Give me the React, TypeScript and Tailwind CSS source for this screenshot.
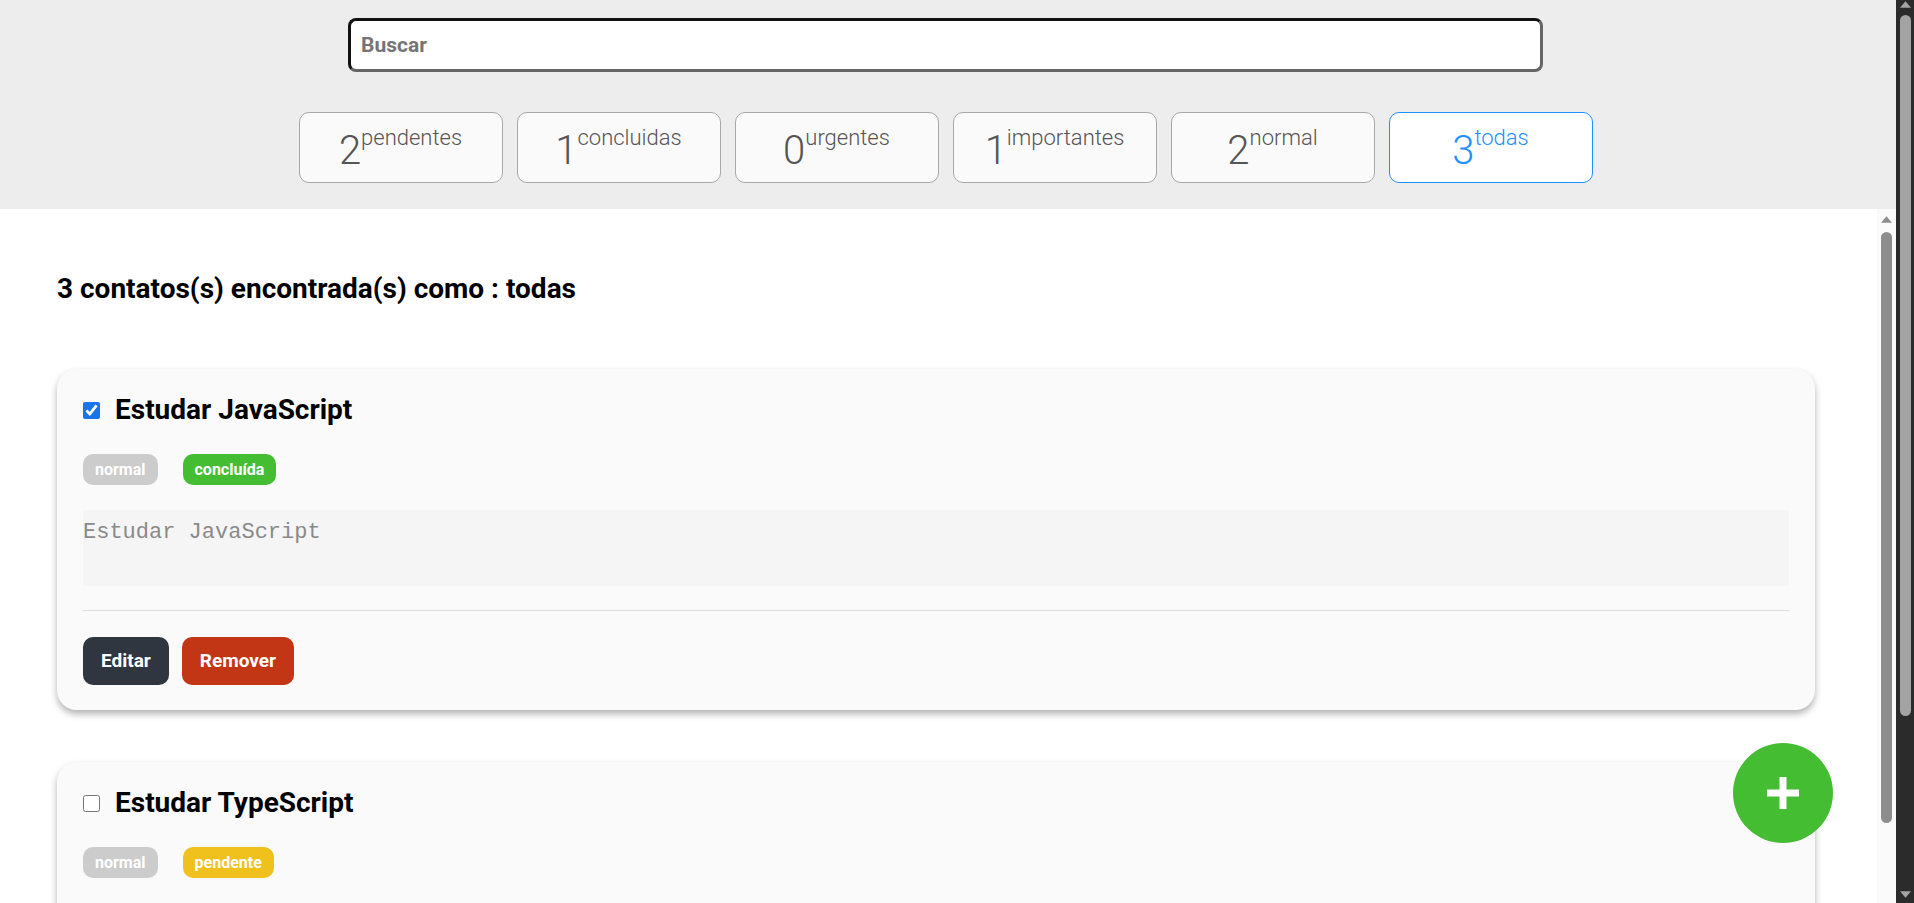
import React from "react";

type Filter = { n: number; label: string; active?: boolean };

const filters: Filter[] = [
  { n: 2, label: "pendentes" },
  { n: 1, label: "concluidas" },
  { n: 0, label: "urgentes" },
  { n: 1, label: "importantes" },
  { n: 2, label: "normal" },
  { n: 3, label: "todas", active: true },
];

type Task = {
  title: string;
  done: boolean;
  tags: { text: string; cls: string }[];
  desc: string;
};

const tasks: Task[] = [
  {
    title: "Estudar JavaScript",
    done: true,
    tags: [
      { text: "normal", cls: "bg-[#cccccc]" },
      { text: "concluída", cls: "bg-[#44bd32]" },
    ],
    desc: "Estudar JavaScript",
  },
  {
    title: "Estudar TypeScript",
    done: false,
    tags: [
      { text: "normal", cls: "bg-[#cccccc]" },
      { text: "pendente", cls: "bg-[#f0c11c]" },
    ],
    desc: "Estudar TypeScript",
  },
  {
    title: "Estudar React",
    done: false,
    tags: [
      { text: "importante", cls: "bg-[#e1b12c]" },
      { text: "pendente", cls: "bg-[#f0c11c]" },
    ],
    desc: "Estudar React",
  },
];

function FilterButton({ f }: { f: Filter }) {
  return (
    <button
      className={
        "w-[204px] h-[71px] pt-[6px] rounded-[10px] border flex items-center justify-center font-light " +
        (f.active
          ? "border-[#1e90ff] bg-white text-[#1e90ff]"
          : "border-[#a8a8a8] bg-[#fafafa] text-[#555555]")
      }
    >
      <span className="flex items-start">
        <span className="text-[40px] leading-[40px]">{f.n}</span>
        <span className="text-[22px] leading-[22px] -mt-[4px]">{f.label}</span>
      </span>
    </button>
  );
}

function TaskCard({ t }: { t: Task }) {
  return (
    <div className="rounded-[20px] bg-[#fafafa] shadow-[0_4px_7px_rgba(0,0,0,0.3)] px-[26px] pt-[27px] pb-[25px]">
      <div className="flex items-center gap-[15px] h-[28px]">
        <input
          type="checkbox"
          defaultChecked={t.done}
          className="w-[17px] h-[17px] accent-[#1a73e8] m-0"
        />
        <span className="text-[28px] leading-[28px] font-bold text-black">{t.title}</span>
      </div>
      <div className="flex gap-[25px] mt-[30px]">
        {t.tags.map((g) => (
          <span
            key={g.text}
            className={
              "h-[31px] px-[12px] rounded-[10px] text-white text-[16px] font-bold flex items-center " +
              g.cls
            }
          >
            {g.text}
          </span>
        ))}
      </div>
      <div className="mt-[25px] h-[76px] bg-[#f5f5f5] pt-[10px] font-['Liberation_Mono',monospace] text-[22px] leading-[26px] text-[#8a8a8a]">
        {t.desc}
      </div>
      <div className="mt-[24px] h-px bg-[#dddddd]" />
      <div className="mt-[26px] flex gap-[13px]">
        <button className="h-[48px] px-[18px] rounded-[10px] bg-[#2f3640] text-white text-[19px] font-bold">
          Editar
        </button>
        <button className="h-[48px] px-[18px] rounded-[10px] bg-[#c23616] text-white text-[19px] font-bold">
          Remover
        </button>
      </div>
    </div>
  );
}

function ArrowUp({ color }: { color: string }) {
  return (
    <svg width="12" height="7" viewBox="0 0 12 7">
      <path d="M6 0 L12 7 L0 7 Z" fill={color} />
    </svg>
  );
}

function ArrowDown({ color }: { color: string }) {
  return (
    <svg width="12" height="7" viewBox="0 0 12 7">
      <path d="M0 0 L12 0 L6 7 Z" fill={color} />
    </svg>
  );
}

export default function App() {
  return (
    <div className="h-screen flex overflow-hidden bg-white font-['Roboto',sans-serif]">
      <div className="flex-1 min-w-0 flex flex-col">
        <header className="h-[209px] shrink-0 bg-[#ededed] flex flex-col items-center pt-[18px] pr-[5px]">
          <input
            placeholder="Buscar"
            className="w-[1195px] h-[54px] rounded-[8px] border-[3px] border-t-[#111111] border-l-[#111111] border-b-[#666666] border-r-[#666666] bg-white px-[10px] text-[21px] font-bold text-black placeholder:text-[#757575] outline-none"
          />
          <div className="mt-[40px] flex gap-[14px]">
            {filters.map((f) => (
              <FilterButton key={f.label} f={f} />
            ))}
          </div>
        </header>
        <div className="flex-1 min-h-0 flex">
          <main className="flex-1 min-w-0 overflow-hidden bg-white pl-[57px] pr-[62px]">
            <h2 className="pt-[66px] text-[28px] leading-[28px] font-bold text-black">
              3 contatos(s) encontrada(s) como : todas
            </h2>
            <div className="mt-[66px] flex flex-col gap-[52px] pb-[60px]">
              {tasks.map((t) => (
                <TaskCard key={t.title} t={t} />
              ))}
            </div>
          </main>
          <div className="w-[19px] shrink-0 bg-[#fafafa] flex flex-col pl-[4px] pt-[7px]">
            <div className="w-[11px] flex justify-center">
              <ArrowUp color="#8d8d8d" />
            </div>
            <div className="mt-[9px] w-[11px] h-[591px] rounded-full bg-[#8d8d8d]" />
          </div>
        </div>
      </div>
      <div className="w-[18px] shrink-0 bg-[#2b2b2b] flex flex-col pl-[4px] pr-[3px] pt-[1px] pb-[5px]">
        <div className="flex justify-center">
          <ArrowUp color="#a3a3a3" />
        </div>
        <div className="mt-[7px] h-[701px] rounded-full bg-[#a3a3a3]" />
        <div className="flex-1" />
        <div className="flex justify-center">
          <ArrowDown color="#a3a3a3" />
        </div>
      </div>
      <button className="fixed right-[81px] bottom-[60px] w-[100px] h-[100px] rounded-full bg-[#44bd32] flex items-center justify-center">
        <svg width="32" height="32" viewBox="0 0 32 32">
          <rect x="0" y="12.5" width="32" height="7" fill="white" />
          <rect x="12.5" y="0" width="7" height="32" fill="white" />
        </svg>
      </button>
    </div>
  );
}
